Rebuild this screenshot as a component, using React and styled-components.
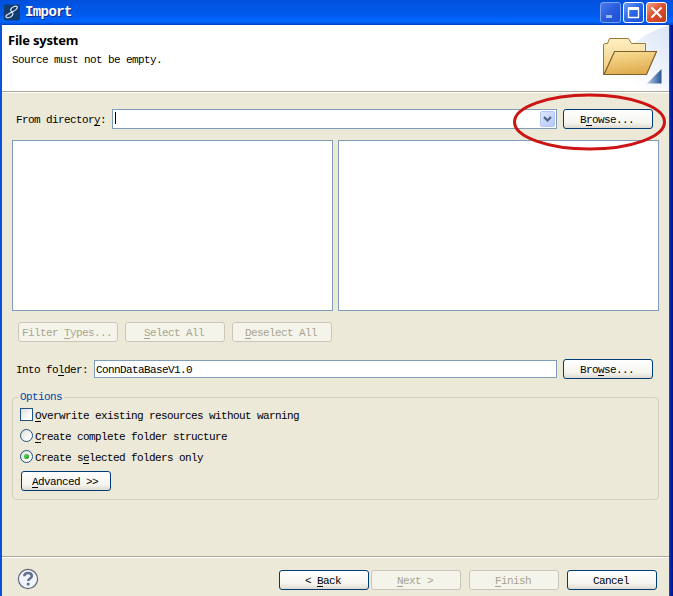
import React from "react";
import styled, { createGlobalStyle, css } from "styled-components";

const Global = createGlobalStyle`
  *, *::before, *::after { box-sizing: border-box; }
  html, body { margin: 0; padding: 0; overflow: hidden; }
  button, input { font: inherit; }
`;

const Window = styled.main`
  position: relative;
  display: flex;
  flex-direction: column;
  width: 673px;
  height: 596px;
  background: linear-gradient(90deg, #0a52dc 0 2px, #ece9d8 2px 669px, #1a50e0 669px, #001c9c 671px, #00138c 673px);
  font: 11px/12px "Liberation Mono", monospace;
  letter-spacing: -0.6px;
  color: #000;
`;

const TitleBar = styled.header`
  display: flex;
  align-items: center;
  height: 25px;
  flex: none;
  padding: 0 6px 1px 4px;
  background: linear-gradient(180deg, #0050dc 0, #0057e5 30%, #0058ec 55%, #0066ff 86%, #0052df 94%, #003dc0 100%);
`;

const Title = styled.h1`
  flex: 1;
  margin: 0 0 0 5px;
  font: bold 14px/16px "Liberation Mono", monospace;
  letter-spacing: -0.6px;
  color: #fff;
  text-shadow: 1px 1px #0a2a80;
`;

const WindowButtons = styled.div`
  display: flex;
  gap: 2px;
`;

const WindowButton = styled.button`
  display: grid;
  place-items: center;
  width: 21px;
  height: 21px;
  padding: 0;
  border: 1px solid ${(p) => (p.$dim ? "#7da0ee" : "#fff")};
  border-radius: 3px;
  background: ${(p) =>
    p.$close
      ? "linear-gradient(135deg, #f0a08a, #dd5230 45%, #c23a18)"
      : p.$dim
        ? "linear-gradient(135deg, #4a7cec, #2a5cdc 50%, #1d50d4)"
        : "linear-gradient(135deg, #6a9bf8, #2a66e4 50%, #1450dc)"};
`;

const Banner = styled.section`
  display: flex;
  justify-content: space-between;
  height: 68px;
  flex: none;
  margin: 0 4px 0 2px;
  padding-left: 6px;
  border-bottom: 1px solid #fff;
  background: #fff;
  box-shadow: inset 0 -1px #aca899;
`;

const Heading = styled.h2`
  margin: 7px 0 6px;
  font: bold 13px/16px "Noto Sans", sans-serif;
  letter-spacing: -0.22px;
`;

const Message = styled.p`
  margin: 0 0 0 4px;
`;

const Body = styled.section`
  display: flex;
  flex-direction: column;
  flex: 1;
  padding: 16px 14px 0 12px;
`;

const Row = styled.div`
  display: flex;
  align-items: center;
  height: 20px;
  flex: none;
  margin-top: ${(p) => p.$top || 0}px;
  padding: 0 6px 0 4px;
`;

const FieldLabel = styled.label`
  width: ${(p) => p.$width}px;
  flex: none;
  padding-top: 2px;
  white-space: pre;
`;

const Field = styled.div`
  display: flex;
  align-items: center;
  justify-content: space-between;
  flex: 1;
  height: ${(p) => p.$height}px;
  margin-right: 6px;
  padding: 1px 1px 1px 2px;
  border: 1px solid #7f9db9;
  background: #fff;
`;

const FieldText = styled.span`
  padding-top: 2px;
  margin-left: -1px;
`;

const Caret = styled.span`
  width: 1px;
  height: 12px;
  margin-bottom: 2px;
  background: #000;
`;

const DropButton = styled.button`
  display: grid;
  place-items: center;
  width: 15px;
  height: 16px;
  padding: 0;
  border: 1px solid #b5c7f4;
  border-radius: 2px;
  background: linear-gradient(135deg, #dbe6ff, #b6cafa);
`;

const Button = styled.button`
  width: ${(p) => p.$width || 90}px;
  height: 20px;
  flex: none;
  padding: 2px 2px 0 0;
  border: 1px solid #003c74;
  border-radius: 3px;
  background: linear-gradient(180deg, #fff, #f5f4ee 70%, #dedbd0);
  letter-spacing: inherit;
  line-height: 12px;
  white-space: pre;
  color: #000;
  ${(p) =>
    p.disabled &&
    css`
      border-color: #c9c7ba;
      background: #f5f4ea;
      color: #a7a491;
    `}
`;

const Mnemonic = styled.span`
  text-decoration: underline;
  text-decoration-thickness: 1px;
  text-underline-offset: 2px;
`;

const Panes = styled.div`
  display: grid;
  grid-template-columns: 1fr 1fr;
  gap: 5px;
  height: 171px;
  flex: none;
  margin-top: 11px;
`;

const Pane = styled.div`
  border: 1px solid #7f9db9;
  background: #fff;
`;

const SelectionActions = styled.div`
  display: flex;
  gap: 7px;
  margin: 11px 0 0 6px;
`;

const Options = styled.fieldset`
  height: 109px;
  flex: none;
  margin: 12px 0 0;
  padding: 5px 7px 0;
  min-width: 0;
  border: 1px solid #d0d0bf;
  border-radius: 4px;
`;

const Legend = styled.legend`
  margin-left: -2px;
  padding: 0 2px;
  color: #0046a5;
`;

const Choice = styled.label`
  display: flex;
  align-items: center;
  gap: 2px;
  height: 13px;
  margin-bottom: 8px;
  white-space: pre;
`;

const ChoiceText = styled.span`
  padding-top: 3px;
`;

const Mark = styled.span`
  display: grid;
  place-items: center;
  width: 13px;
  height: 13px;
  border: 1px solid #1d5281;
  border-radius: ${(p) => (p.$round ? "50%" : "0")};
  background: linear-gradient(135deg, #dcdcd7, #fff 75%);
`;

const Dot = styled.span`
  width: 5px;
  height: 5px;
  border-radius: 50%;
  background: radial-gradient(circle at 35% 35%, #55d551, #21a121 70%);
`;

const AdvancedRow = styled.div`
  padding-left: 1px;
`;

const Footer = styled.footer`
  display: flex;
  align-items: flex-start;
  height: 40px;
  flex: none;
  margin: 0 4px 0 2px;
  padding: 11px 12px 0 15px;
  border-top: 1px solid #aca899;
  box-shadow: inset 0 1px #fff;
`;

const FooterButtons = styled.div`
  display: flex;
  gap: 8px;
  margin: 2px 0 0 auto;
`;

const Paging = styled.div`
  display: flex;
  gap: 2px;
`;

const Highlight = styled.svg`
  position: absolute;
  left: 510px;
  top: 90px;
  pointer-events: none;
`;

function AppIcon() {
  return (
    <svg width="16" height="17" viewBox="0 0 16 17">
      <rect width="16" height="16" y=".5" rx="2" fill="#123b70" />
      <path
        d="M12.500 5C14.500 2.500 12.500 1.500 10 2.500C7 3.700 5.500 6 7.500 7.500C9.500 9 9.500 11 7 12.700C4.500 14.300 1.500 14 2 12C2.600 9.800 10.500 7.700 12.500 5Z"
        fill="none"
        stroke="#dbe6ef"
        strokeWidth="1.200"
      />
    </svg>
  );
}

function FolderArt() {
  return (
    <svg width="75" height="66" viewBox="594 25 75 66">
      <defs>
        <linearGradient id="sky" x1="0" y1="1" x2="1" y2="0">
          <stop offset=".3" stopColor="#fff" />
          <stop offset="1" stopColor="#d9e4f5" />
        </linearGradient>
        <linearGradient id="front" x1="0" y1="0" x2="0.3" y2="1">
          <stop offset="0" stopColor="#fbe19a" />
          <stop offset="1" stopColor="#dfae50" />
        </linearGradient>
        <linearGradient id="back" x1="0" y1="0" x2="0" y2="1">
          <stop offset="0" stopColor="#fff0c4" />
          <stop offset="1" stopColor="#edc978" />
        </linearGradient>
        <linearGradient id="corner" x1="0" y1="0" x2="1" y2="0">
          <stop offset=".1" stopColor="#a8c1df" />
          <stop offset="1" stopColor="#2a5494" />
        </linearGradient>
      </defs>
      <path d="M600 91Q620 40 669 25V91Z" fill="url(#sky)" />
      <path
        d="M603.500 74.500V44.500L605 43.500H607.500L609.500 38.500H628.500L631.500 43.500H645.500V74.500Z"
        fill="url(#back)"
        stroke="#9b7936"
      />
      <path d="M604 74.500L614.500 51.500H656.500L646.500 74.500Z" fill="url(#front)" stroke="#80602a" strokeWidth="1.200" />
      <path d="M661.500 69V83.500H647Z" fill="url(#corner)" />
    </svg>
  );
}

function HelpIcon() {
  return (
    <svg width="22" height="22" viewBox="0 0 22 22">
      <circle cx="11" cy="11" r="9.600" fill="#f1f4fa" stroke="#62697c" strokeWidth="1.200" />
      <path
        d="M7.300 8.300C7.300 6 9 5 11.100 5c2.200 0 3.700 1.100 3.700 2.900 0 2.600-3.600 2.500-3.600 5"
        fill="none"
        stroke="#62708f"
        strokeWidth="2.500"
      />
      <rect x="9.800" y="14.800" width="2.800" height="2.700" rx=".7" fill="#62708f" />
    </svg>
  );
}

const M = Mnemonic;

export default function App() {
  return (
    <>
      <Global />
      <Window>
        <TitleBar>
          <AppIcon />
          <Title>Import</Title>
          <WindowButtons>
            <WindowButton $dim aria-label="Minimize">
              <svg width="17" height="17">
                <path d="M4 12.500h6" stroke="#9bb8f4" strokeWidth="3" />
              </svg>
            </WindowButton>
            <WindowButton aria-label="Maximize">
              <svg width="17" height="17">
                <path d="M3.500 4v9.500h10V4" fill="none" stroke="#fff" strokeWidth="1.400" />
                <path d="M3 4.500h11" stroke="#fff" strokeWidth="3" />
              </svg>
            </WindowButton>
            <WindowButton $close aria-label="Close">
              <svg width="17" height="17">
                <path d="M3.500 3.500l10 10M13.500 3.500l-10 10" stroke="#fff" strokeWidth="2" />
              </svg>
            </WindowButton>
          </WindowButtons>
        </TitleBar>
        <Banner>
          <div>
            <Heading>File system</Heading>
            <Message>Source must not be empty.</Message>
          </div>
          <FolderArt />
        </Banner>
        <Body>
          <Row>
            <FieldLabel $width={96}>From director<M>y</M>:</FieldLabel>
            <Field $height={20}>
              <Caret />
              <DropButton aria-label="Show directories">
                <svg width="11" height="10">
                  <path d="M2 3l3.500 3.500L9 3" fill="none" stroke="#4d6185" strokeWidth="2.200" />
                </svg>
              </DropButton>
            </Field>
            <Button>B<M>r</M>owse...</Button>
          </Row>
          <Panes>
            <Pane />
            <Pane />
          </Panes>
          <SelectionActions>
            <Button $width={100} disabled>Filter <M>T</M>ypes...</Button>
            <Button $width={100} disabled><M>S</M>elect All</Button>
            <Button $width={100} disabled><M>D</M>eselect All</Button>
          </SelectionActions>
          <Row $top={17}>
            <FieldLabel $width={78}>Into fo<M>l</M>der:</FieldLabel>
            <Field $height={18}>
              <FieldText>ConnDataBaseV1.0</FieldText>
            </Field>
            <Button>Bro<M>w</M>se...</Button>
          </Row>
          <Options>
            <Legend>Options</Legend>
            <Choice>
              <Mark />
              <ChoiceText><M>O</M>verwrite existing resources without warning</ChoiceText>
            </Choice>
            <Choice>
              <Mark $round />
              <ChoiceText><M>C</M>reate complete folder structure</ChoiceText>
            </Choice>
            <Choice>
              <Mark $round><Dot /></Mark>
              <ChoiceText>Create s<M>e</M>lected folders only</ChoiceText>
            </Choice>
            <AdvancedRow>
              <Button><M>A</M>dvanced &gt;&gt;</Button>
            </AdvancedRow>
          </Options>
        </Body>
        <Footer>
          <HelpIcon />
          <FooterButtons>
            <Paging>
              <Button>&lt; <M>B</M>ack</Button>
              <Button disabled><M>N</M>ext &gt;</Button>
            </Paging>
            <Button disabled><M>F</M>inish</Button>
            <Button>Cancel</Button>
          </FooterButtons>
        </Footer>
        <Highlight width="160" height="64">
          <ellipse cx="79.500" cy="32" rx="75" ry="27" fill="none" stroke="#cc1414" strokeWidth="3" />
        </Highlight>
      </Window>
    </>
  );
}
